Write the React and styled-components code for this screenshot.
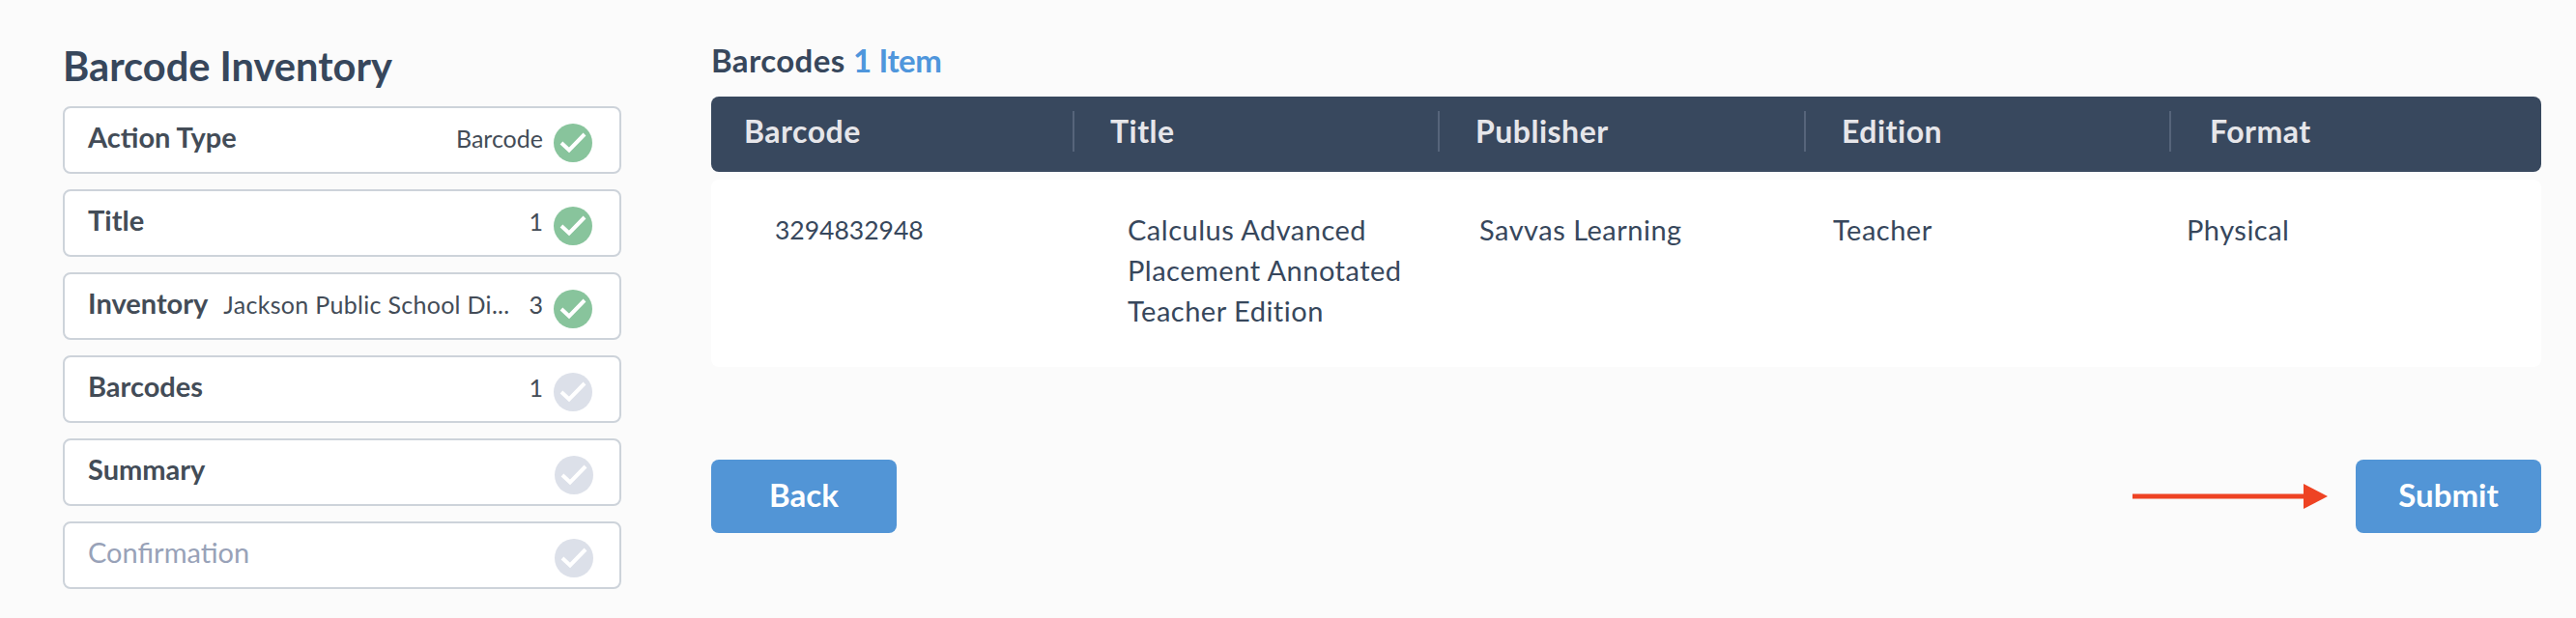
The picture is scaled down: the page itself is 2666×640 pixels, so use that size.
import React from "react";
import styled, { createGlobalStyle } from "styled-components";

const GlobalStyle = createGlobalStyle`
  html, body {
    margin: 0;
    height: 640px;
    overflow: hidden;
    background: #fbfbfb;
    font-family: "Lato", "Liberation Sans", sans-serif;
  }
`;

const Page = styled.div`
  display: flex;
  width: 2666px;
  height: 640px;
  box-sizing: border-box;
  padding: 0 36px 0 65px;
`;

const Sidebar = styled.aside`
  width: 578px;
  margin-right: 93px;
  padding-top: 44px;
  flex-shrink: 0;
`;

const Heading = styled.h1`
  margin: 0 0 17px;
  height: 49px;
  line-height: 49px;
  font-size: 41.6px;
  font-weight: 700;
  color: #37475c;
`;

const Steps = styled.div`
  display: flex;
  flex-direction: column;
  gap: 16px;
`;

const Step = styled.div`
  display: flex;
  align-items: center;
  height: 70px;
  box-sizing: border-box;
  padding: 0 28px 0 24px;
  background: #fff;
  border: 2px solid #cdd3da;
  border-radius: 8px;
`;

const StepLabel = styled.span`
  flex-shrink: 0;
  margin-bottom: 8px;
  font-size: 29px;
  color: ${(p) => (p.$muted ? "#98a2b8" : "#434c57")};
  font-weight: ${(p) => (p.$muted ? 400 : 700)};
`;

const StepValue = styled.span`
  flex: 1;
  margin-right: ${(p) => (p.$beforeCount ? "20px" : "11px")};
  margin-bottom: 4px;
  text-align: right;
  font-size: 25px;
  letter-spacing: ${(p) => (p.$beforeCount ? "0.3px" : "0")};
  color: #434c57;
  white-space: nowrap;
`;

const StepCount = styled.span`
  flex-shrink: 0;
  margin-right: 11px;
  margin-bottom: 4px;
  font-size: 25px;
  color: #434c57;
`;

const Spacer = styled.span`
  flex: 1;
`;

const CheckBadge = styled.svg`
  width: 40px;
  height: 40px;
  flex-shrink: 0;
  margin-top: 6px;
  margin-right: ${(p) => (p.$nudge ? "-1px" : "0")};
`;

const Main = styled.main`
  flex: 1;
  padding-top: 43px;
`;

const TableTitle = styled.h2`
  margin: 0 0 19px;
  height: 38px;
  line-height: 38px;
  font-size: 33px;
  letter-spacing: 0.4px;
  font-weight: 700;
  color: #37475c;
`;

const Count = styled.span`
  letter-spacing: -0.4px;
  color: #4f96dc;
`;

const HeaderRow = styled.div`
  display: grid;
  grid-template-columns: 376px 378px 379px 378px 1fr;
  align-items: center;
  height: 78px;
  background: #38485e;
  border-radius: 8px;
`;

const HeaderCell = styled.div`
  position: relative;
  padding: 0 0 8px 37px;
  font-size: 32px;
  letter-spacing: 0.5px;
  font-weight: 700;
  color: #e6e6ea;

  &:first-child {
    padding-left: 34px;
  }

  &:last-child {
    padding-left: 40px;
  }

  &:not(:last-child)::after {
    content: "";
    position: absolute;
    top: -1px;
    right: 0;
    width: 2px;
    height: 42px;
    background: #56647a;
  }
`;

const BodyRow = styled.div`
  display: grid;
  grid-template-columns: 365px 364px 366px 366px 1fr;
  height: 194px;
  box-sizing: border-box;
  margin-top: 8px;
  padding: 31px 0 0 66px;
  background: #fff;
  border-radius: 8px;
`;

const BodyCell = styled.div`
  font-size: 29px;
  letter-spacing: 0.5px;
  line-height: 42px;
  color: #37475c;
`;

const BarcodeCell = styled(BodyCell)`
  font-size: 26.5px;
  letter-spacing: 0;
`;

const TitleText = styled.div`
  width: 310px;
`;

const Actions = styled.div`
  display: flex;
  align-items: center;
  margin-top: 96px;
`;

const Button = styled.button`
  width: 192px;
  height: 76px;
  padding: 0 0 5px;
  border: 0;
  border-radius: 8px;
  background: #5295d6;
  color: #fff;
  font-family: inherit;
  font-size: 33px;
  font-weight: 700;
`;

const Arrow = styled.svg`
  width: 202px;
  height: 26px;
  margin-left: auto;
  margin-right: 29px;
`;

const Check = ({ done, nudge }) => (
  <CheckBadge viewBox="0 0 40 40" $nudge={nudge}>
    <circle cx="20" cy="20" r="20" fill={done ? "#88c49c" : "#dce0e9"} />
    <path d="M8 20l8 7.5L32 11" fill="none" stroke="#fff" strokeWidth="4" />
  </CheckBadge>
);

const steps = [
  { label: "Action Type", value: "Barcode", done: true },
  { label: "Title", count: "1", done: true },
  { label: "Inventory", value: "Jackson Public School Di...", count: "3", done: true },
  { label: "Barcodes", count: "1" },
  { label: "Summary" },
  { label: "Confirmation", muted: true },
];

const columns = ["Barcode", "Title", "Publisher", "Edition", "Format"];

export default function App() {
  return (
    <Page>
      <GlobalStyle />
      <Sidebar>
        <Heading>Barcode Inventory</Heading>
        <Steps>
          {steps.map((s) => (
            <Step key={s.label}>
              <StepLabel $muted={s.muted}>{s.label}</StepLabel>
              {s.value ? <StepValue $beforeCount={!!s.count}>{s.value}</StepValue> : <Spacer />}
              {s.count && <StepCount>{s.count}</StepCount>}
              <Check done={s.done} nudge={!s.value && !s.count} />
            </Step>
          ))}
        </Steps>
      </Sidebar>
      <Main>
        <TableTitle>
          Barcodes <Count>1 Item</Count>
        </TableTitle>
        <HeaderRow>
          {columns.map((c) => (
            <HeaderCell key={c}>{c}</HeaderCell>
          ))}
        </HeaderRow>
        <BodyRow>
          <BarcodeCell>3294832948</BarcodeCell>
          <BodyCell>
            <TitleText>Calculus Advanced Placement Annotated Teacher Edition</TitleText>
          </BodyCell>
          <BodyCell>Savvas Learning</BodyCell>
          <BodyCell>Teacher</BodyCell>
          <BodyCell>Physical</BodyCell>
        </BodyRow>
        <Actions>
          <Button>Back</Button>
          <Arrow viewBox="0 0 202 26">
            <rect x="0" y="10.5" width="178" height="5" fill="#ee4323" />
            <polygon points="177,0 202,13 177,26" fill="#ee4323" />
          </Arrow>
          <Button>Submit</Button>
        </Actions>
      </Main>
    </Page>
  );
}
